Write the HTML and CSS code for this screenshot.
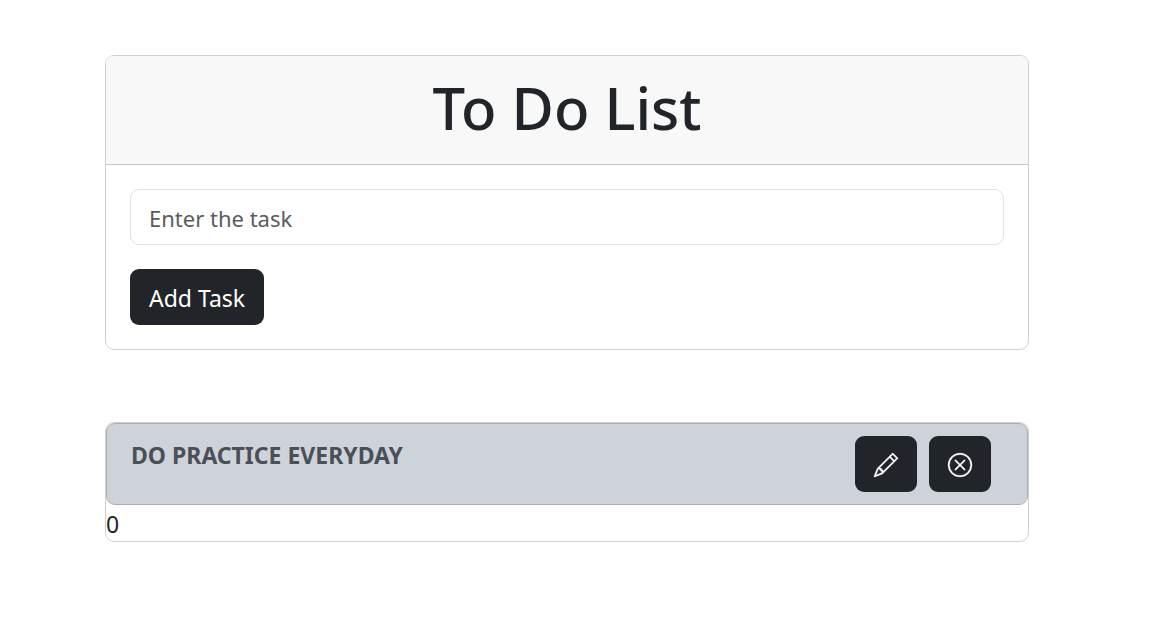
FILE: index.html
```html
<!DOCTYPE html>
<html lang="en">
<head>
<meta charset="utf-8">
<meta name="viewport" content="width=device-width, initial-scale=1">
<title>To Do List</title>
<link rel="stylesheet" href="styles.css">
</head>
<body>
<main class="container">
  <section class="card">
    <header class="card-header"><h1 class="title">To Do List</h1></header>
    <form class="card-body">
      <input class="task-input" type="text" placeholder="Enter the task" aria-label="Enter the task">
      <button class="btn" type="button">Add Task</button>
    </form>
  </section>
  <section class="card">
    <div class="task">
      <h2 class="task-name">DO PRACTICE EVERYDAY</h2>
      <div class="actions">
        <button class="btn" type="button" aria-label="Edit task">
          <svg class="icon" viewBox="0 0 16 16" fill="currentColor" aria-hidden="true"><path d="M12.146.146a.5.5 0 0 1 .708 0l3 3a.5.5 0 0 1 0 .708l-10 10a.5.5 0 0 1-.168.11l-5 2a.5.5 0 0 1-.65-.65l2-5a.5.5 0 0 1 .11-.168zM11.207 2.5 13.5 4.793 14.793 3.5 12.5 1.207zm1.586 3L10.5 3.207 4 9.707V10h.5a.5.5 0 0 1 .5.5v.5h.5a.5.5 0 0 1 .5.5v.5h.293zm-9.761 5.175-.106.106-1.528 3.821 3.821-1.528.106-.106A.5.5 0 0 1 5 12.5V12h-.5a.5.5 0 0 1-.5-.5V11h-.5a.5.5 0 0 1-.468-.325"/></svg>
        </button>
        <button class="btn" type="button" aria-label="Remove task">
          <svg class="icon" viewBox="0 0 16 16" fill="currentColor" aria-hidden="true"><path d="M8 15A7 7 0 1 1 8 1a7 7 0 0 1 0 14m0 1A8 8 0 1 0 8 0a8 8 0 0 0 0 16"/><path d="M4.646 4.646a.5.5 0 0 1 .708 0L8 7.293l2.646-2.647a.5.5 0 0 1 .708.708L8.707 8l2.647 2.646a.5.5 0 0 1-.708.708L8 8.707l-2.646 2.647a.5.5 0 0 1-.708-.708L7.293 8 4.646 5.354a.5.5 0 0 1 0-.708"/></svg>
        </button>
      </div>
    </div>
    <p class="count">0</p>
  </section>
</main>
</body>
</html>
```

FILE: styles.css
```css
* { box-sizing: border-box; }
body {
  margin: 0;
  background: #fff;
  color: #212529;
  font-family: "Segoe UI", "Noto Sans", "Open Sans", sans-serif;
  font-size: 23px;
  line-height: 36px;
}
.container {
  display: flex;
  flex-direction: column;
  gap: 72px;
  padding: 55px 141px 55px 105px;
}
.card {
  border: 1px solid #d0d0d1;
  border-radius: 9px;
  background: #fff;
}
.card-header {
  padding: 16px 24px 20px;
  border-bottom: 1px solid #c9c9ca;
  border-radius: 8px 8px 0 0;
  background: #f8f8f8;
  text-align: center;
}
.title {
  margin: 0;
  font-size: 58px;
  font-weight: 500;
  line-height: 72px;
}
.card-body {
  display: flex;
  flex-direction: column;
  align-items: flex-start;
  gap: 24px;
  padding: 24px;
}
.task-input {
  width: 100%;
  height: 56px;
  padding: 2px 18px 0;
  border: 1px solid #dee2e6;
  border-radius: 9px;
  color: #212529;
  font: inherit;
  font-size: 22px;
}
.task-input::placeholder { color: #595c5f; opacity: 1; }
.btn {
  display: flex;
  align-items: center;
  height: 56px;
  padding: 2px 19px 0;
  border: 0;
  border-radius: 9px;
  background: #212529;
  color: #fff;
  font: inherit;
}
.task {
  display: flex;
  justify-content: space-between;
  align-items: flex-start;
  min-height: 82px;
  padding: 12px 36px 12px 24px;
  border: 1px solid #a9afb5;
  border-radius: 9px;
  background: #ced3da;
}
.task-name {
  margin: 0;
  color: #495057;
  font-size: 23px;
  font-weight: 700;
  line-height: 38px;
}
.actions { display: flex; gap: 12px; }
.icon {
  display: block;
  width: 24px;
  height: 24px;
  overflow: visible;
  stroke: currentColor;
  stroke-width: 0.2;
}
.count { margin: 0; padding-top: 2px; line-height: 34px; }
```
